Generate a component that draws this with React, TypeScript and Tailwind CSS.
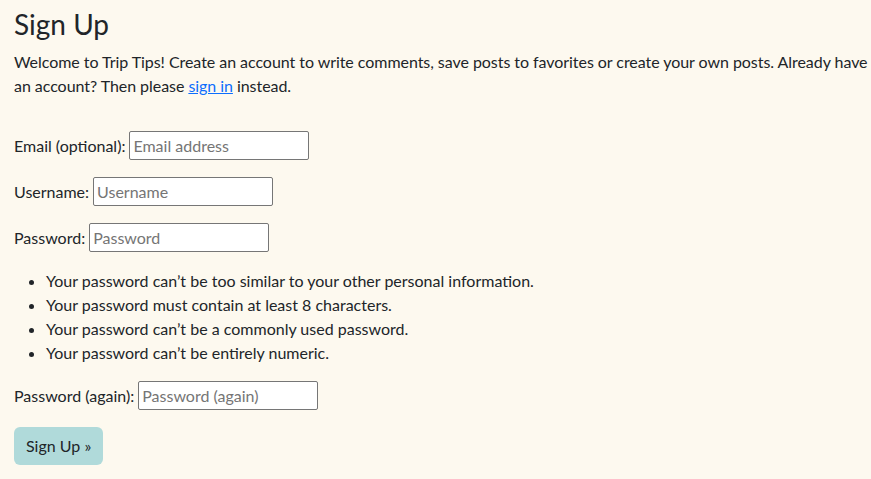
export default function App() {
  const rows1 = [
    { label: 'Email (optional):', placeholder: 'Email address', type: 'email' },
    { label: 'Username:', placeholder: 'Username', type: 'text' },
    { label: 'Password:', placeholder: 'Password', type: 'password' },
  ]

  const rules = [
    'Your password can\u2019t be too similar to your other personal information.',
    'Your password must contain at least 8 characters.',
    'Your password can\u2019t be a commonly used password.',
    'Your password can\u2019t be entirely numeric.',
  ]

  const field = (label: string, placeholder: string, type: string) => (
    <div key={label} className="flex items-center h-[30px] mb-4 gap-1">
      <label className="leading-6">{label}</label>
      <input
        type={type}
        placeholder={placeholder}
        className="w-[180px] h-[29px] px-[3px] bg-white border border-[#767676] rounded-[2px] text-[16px] leading-6 text-[#212529] placeholder:text-[#757575] outline-none"
      />
    </div>
  )

  return (
    <div className="min-h-[479px] w-full bg-[#fdf9ef] text-[#212529] text-[16px] leading-6 pl-[14px] pt-[8px] font-['Lato',_'Noto_Sans',_sans-serif]">
      <h2 className="text-[28px] leading-[1.2] font-normal mb-2">Sign Up</h2>
      <p className="mb-[33px] tracking-[-0.05px]">
        Welcome to Trip Tips! Create an account to write comments, save posts to favorites or create your own posts. Already have an account? Then please{' '}
        <a href="#" className="text-[#0d6efd] underline">sign in</a> instead.
      </p>
      <form>
        {rows1.map((r) => field(r.label, r.placeholder, r.type))}
        <ul className="list-disc pl-8 mb-4">
          {rules.map((r) => (
            <li key={r}>{r}</li>
          ))}
        </ul>
        {field('Password (again):', 'Password (again)', 'password')}
        <button
          type="button"
          className="h-[38px] px-3 rounded-[6px] bg-[#b0dada] text-[#212529] text-[16px] leading-6"
        >
          Sign Up »
        </button>
      </form>
    </div>
  )
}
